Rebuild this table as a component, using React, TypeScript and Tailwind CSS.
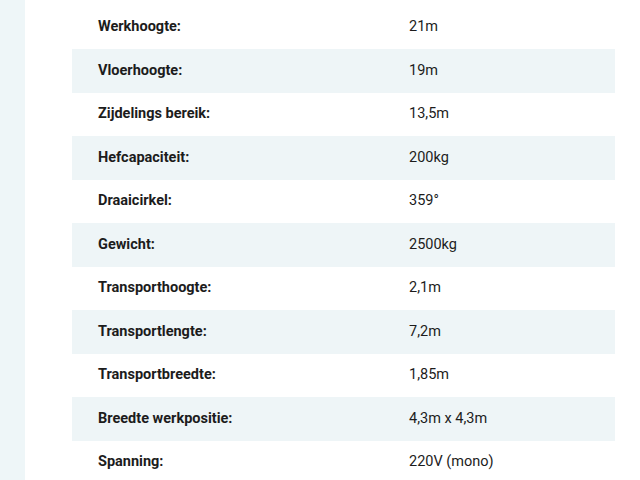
const specs = [
  { label: 'Werkhoogte:', value: '21m' },
  { label: 'Vloerhoogte:', value: '19m' },
  { label: 'Zijdelings bereik:', value: '13,5m' },
  { label: 'Hefcapaciteit:', value: '200kg' },
  { label: 'Draaicirkel:', value: '359°' },
  { label: 'Gewicht:', value: '2500kg' },
  { label: 'Transporthoogte:', value: '2,1m' },
  { label: 'Transportlengte:', value: '7,2m' },
  { label: 'Transportbreedte:', value: '1,85m' },
  { label: 'Breedte werkpositie:', value: '4,3m x 4,3m' },
  { label: 'Spanning:', value: '220V (mono)' },
];

const App = () => {
  return (
    <div className="flex h-[480px] w-[640px] overflow-hidden bg-white font-['Roboto',sans-serif] text-[14.5px] text-[#1c1c1c]">
      {/* side strip */}
      <div className="w-[25px] shrink-0 bg-[#eef6f8]" />

      <div className="flex-1 pt-[5.5px] pl-[47px]">
        <div className="w-[543px]">
          {specs.map((spec, index) => (
            <div
              key={spec.label}
              className={`grid h-[43.5px] grid-cols-[337px_1fr] items-center ${
                index % 2 === 1 ? 'bg-[#eef5f7]' : 'bg-white'
              }`}
            >
              <span className="pl-[26px] font-bold">{spec.label}</span>
              <span>{spec.value}</span>
            </div>
          ))}
        </div>
      </div>
    </div>
  );
};

export default App;
